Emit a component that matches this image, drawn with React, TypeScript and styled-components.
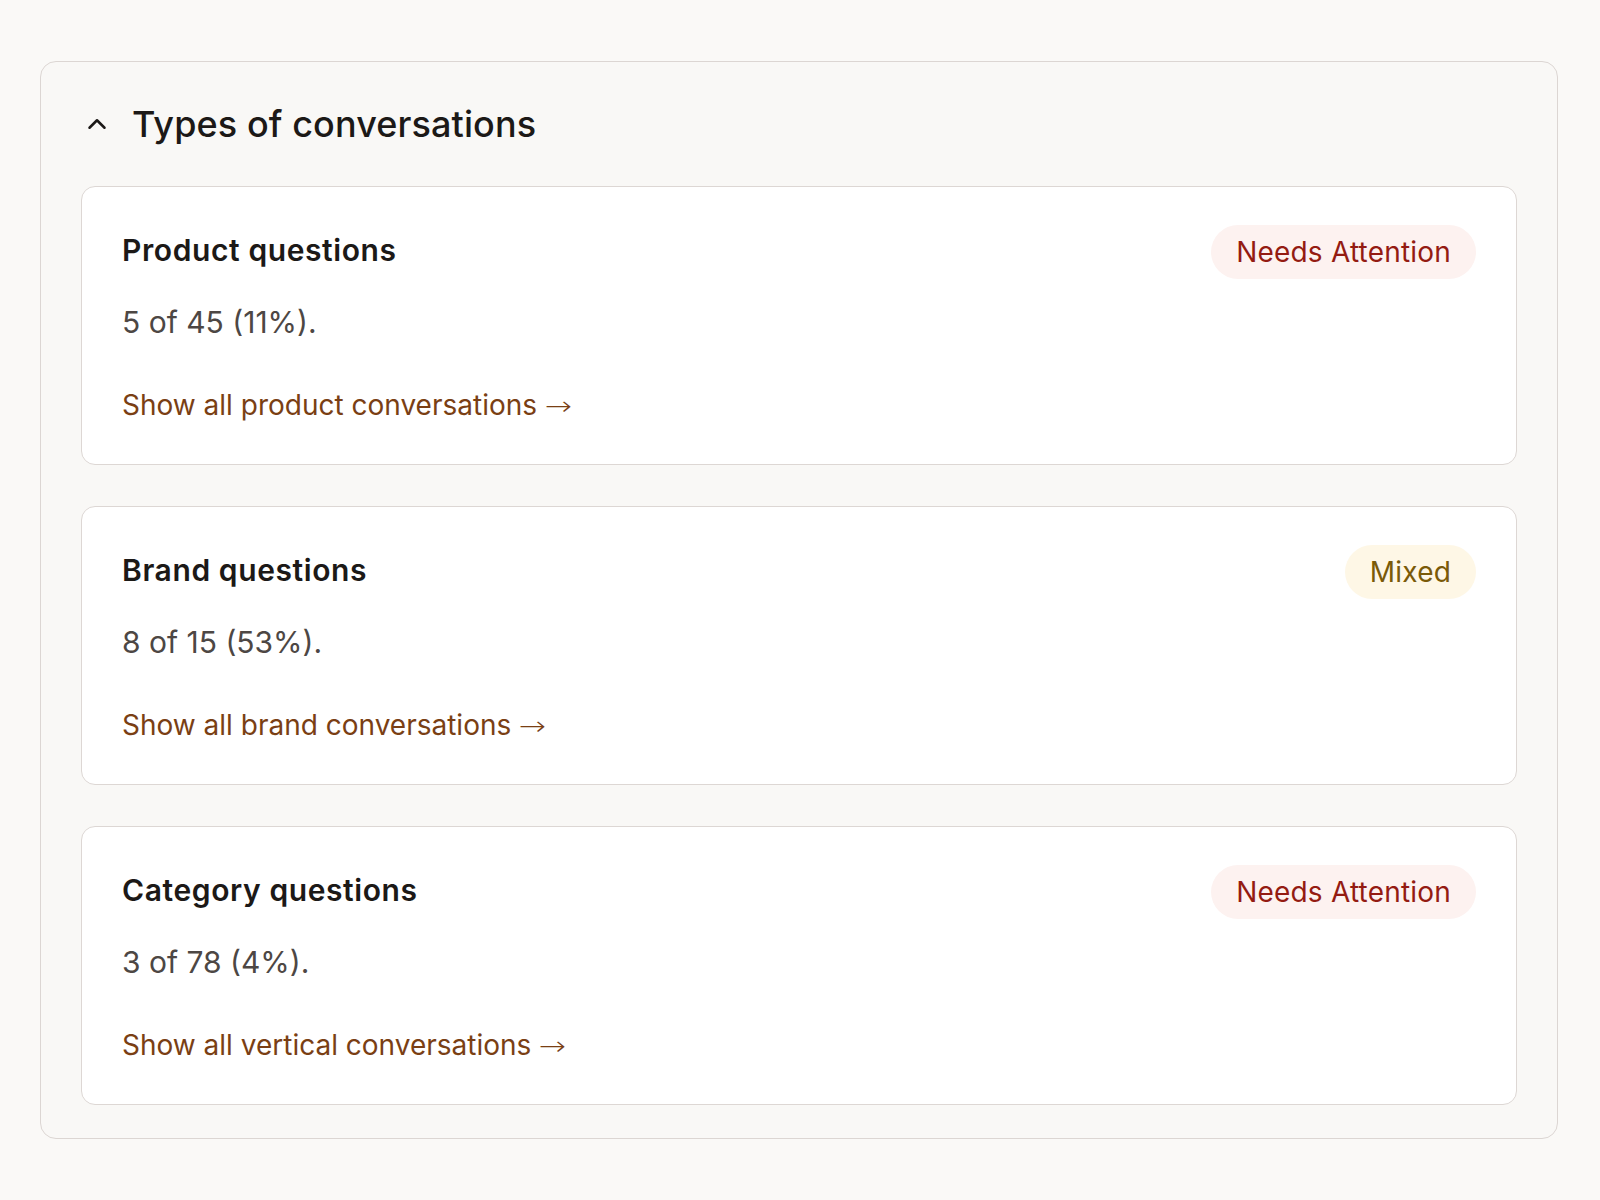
import React from 'react';
import styled, { createGlobalStyle } from 'styled-components';

const GlobalStyle = createGlobalStyle`
  html, body {
    margin: 0;
    padding: 0;
    background: #faf9f7;
  }
  body {
    font-family: Inter, "Noto Sans", sans-serif;
    color: #1c1917;
  }
`;

type Status = 'attention' | 'mixed';

const conversationTypes: {
  title: string;
  stat: string;
  link: string;
  status: Status;
}[] = [
  {
    title: 'Product questions',
    stat: '5 of 45 (11%).',
    link: 'Show all product conversations',
    status: 'attention',
  },
  {
    title: 'Brand questions',
    stat: '8 of 15 (53%).',
    link: 'Show all brand conversations',
    status: 'mixed',
  },
  {
    title: 'Category questions',
    stat: '3 of 78 (4%).',
    link: 'Show all vertical conversations',
    status: 'attention',
  },
];

const statusLabel: Record<Status, string> = {
  attention: 'Needs Attention',
  mixed: 'Mixed',
};

export default function App() {
  return (
    <>
      <GlobalStyle />
      <Page>
        <Panel>
          <PanelHeader>
            <ChevronUp />
            <PanelTitle>Types of conversations</PanelTitle>
          </PanelHeader>
          <CardList>
            {conversationTypes.map((t) => (
              <Card key={t.title}>
                <CardHeader>
                  <CardTitle>{t.title}</CardTitle>
                  <Badge status={t.status}>{statusLabel[t.status]}</Badge>
                </CardHeader>
                <Stat>{t.stat}</Stat>
                <ShowLink href="#">
                  {t.link} <Arrow>→</Arrow>
                </ShowLink>
              </Card>
            ))}
          </CardList>
        </Panel>
      </Page>
    </>
  );
}

const ChevronUp = () => (
  <ChevronIcon
    viewBox="0 0 24 24"
    fill="none"
    stroke="currentColor"
    strokeWidth={2}
    strokeLinecap="round"
    strokeLinejoin="round"
  >
    <path d="m18 15-6-6-6 6" />
  </ChevronIcon>
);

const Page = styled.div`
  padding: 61px 42px 60px 40px;
`;

const Panel = styled.section`
  background: #f9f8f6;
  border: 1px solid #dcd6d3;
  border-radius: 16px;
  padding: 40px 40px 33px 40px;
`;

const PanelHeader = styled.div`
  display: flex;
  align-items: center;
  gap: 20px;
  height: 44px;
  margin-bottom: 40px;
`;

const ChevronIcon = styled.svg`
  width: 30px;
  height: 30px;
  color: #1c1917;
  flex-shrink: 0;
  margin-top: -1px;
  margin-left: 1px;
`;

const PanelTitle = styled.h2`
  margin: 0;
  font-size: 36px;
  font-weight: 500;
  line-height: 52px;
  color: #1c1917;
  letter-spacing: 0.1px;
`;

const CardList = styled.div`
  display: flex;
  flex-direction: column;
  gap: 41px;
`;

const Card = styled.div`
  background: #ffffff;
  border: 1px solid #ddd7d4;
  border-radius: 14px;
  padding: 38px 40px 42px 40px;
  display: flex;
  flex-direction: column;
  align-items: flex-start;
`;

const CardHeader = styled.div`
  display: flex;
  align-items: center;
  justify-content: space-between;
  align-self: stretch;
  min-height: 54px;
`;

const CardTitle = styled.h3`
  margin: -5px 0 0 0;
  font-size: 30px;
  font-weight: 600;
  line-height: 36px;
  color: #1c1917;
  letter-spacing: 0.6px;
`;

const Badge = styled.span<{ status: Status }>`
  display: inline-flex;
  align-items: center;
  height: 54px;
  padding: 0 25px;
  border-radius: 27px;
  font-size: 28px;
  font-weight: 400;
  letter-spacing: 0.2px;
  background: ${(p) => (p.status === 'attention' ? '#fdf2f0' : '#fef7e6')};
  color: ${(p) => (p.status === 'attention' ? '#941b12' : '#7a5a08')};
`;

const Stat = styled.p`
  margin: 25px 0 0 0;
  font-size: 30px;
  font-weight: 400;
  line-height: 36px;
  color: #4d4744;
`;

const ShowLink = styled.a`
  display: block;
  margin-top: 48px;
  font-size: 28px;
  line-height: 34px;
  height: 34px;
  color: #7a3f14;
  text-decoration: none;
`;

const Arrow = styled.span`
  font-family: "DejaVu Sans", sans-serif;
  font-size: 26px;
  line-height: 0;
  display: inline-block;
  transform: scaleX(1.25);
  transform-origin: left center;
  font-weight: 300;
`;
